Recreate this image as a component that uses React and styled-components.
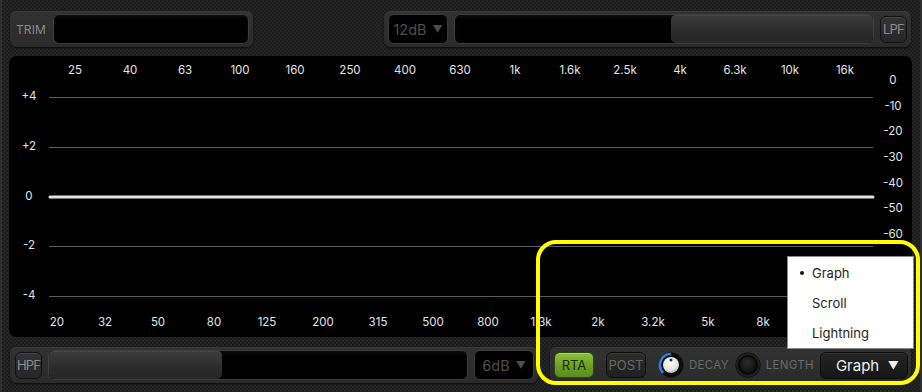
import React from 'react';
import styled, { createGlobalStyle } from 'styled-components';

const Global = createGlobalStyle`
  html, body { margin: 0; padding: 0; background: #1d1d1d; }
  body { font-family: Inter, "Open Sans", "Liberation Sans", sans-serif; }
  * { box-sizing: border-box; }
`;

const Page = styled.div`
  position: relative;
  width: 922px;
  height: 392px;
  padding: 11px 10px 0 9px;
  display: flex;
  flex-direction: column;
  overflow: hidden;
  background: repeating-conic-gradient(#252525 0 25%, #1b1b1b 0 50%) 0 0 / 4px 4px;
  box-shadow: inset 2px 0 0 #2e2e2e, inset -2px 0 0 #2e2e2e;
`;

const Bar = styled.div`
  display: flex;
  justify-content: space-between;
  align-items: center;
  padding: 0 1px;
  height: 36px;
  margin-top: ${p => p.$mt || 0}px;
`;

const Group = styled.div`
  display: flex;
  align-items: center;
  width: ${p => p.$w}px;
  height: 36px;
  padding: 0 4px 0 ${p => p.$pl || 4}px;
  gap: ${p => p.$gap || 6}px;
  background: linear-gradient(#323232, #2a2a2a);
  border-radius: 7px;
  box-shadow: inset 0 1px 0 #3a3a3a, 0 1px 2px rgba(0, 0, 0, 0.7);
`;

const GroupLabel = styled.span`
  font-size: 12px;
  color: #8a8a8a;
  letter-spacing: 0.1px;
  width: 29px;
`;

const Field = styled.div`
  position: relative;
  flex: 1;
  height: 30px;
  background: #000;
  border-radius: 6px;
  border: 1px solid #3d3d3d;
  box-shadow: inset 0 2px 3px rgba(255, 255, 255, 0.06);
  overflow: hidden;
  display: flex;
  justify-content: ${p => (p.$thumbRight ? 'flex-end' : 'flex-start')};
`;

const Thumb = styled.div`
  height: 100%;
  width: ${p => p.$w}px;
  border-radius: 5px;
  background: linear-gradient(#3b3b3b, #2c2c2c 60%, #262626);
  box-shadow: inset 0 1px 0 #444;
`;

const DbSelect = styled.div`
  width: 60px;
  height: 30px;
  flex: none;
  background: #000;
  border: 1px solid #3a3a3a;
  border-radius: 6px;
  display: flex;
  align-items: center;
  justify-content: center;
  gap: 6px;
  color: #4e4e4e;
  font-size: 14.5px;
  span { font-size: 10px; }
`;

const FilterButton = styled.div`
  width: 27px;
  height: 27px;
  flex: none;
  border-radius: 6px;
  background: linear-gradient(#333, #262626);
  border: 1px solid #111;
  box-shadow: inset 0 1px 0 #444;
  color: #8c8c8c;
  font-size: 13px;
  display: flex;
  align-items: center;
  justify-content: center;
  letter-spacing: -0.8px;
`;

const Chart = styled.div`
  position: relative;
  margin-top: 9px;
  width: 903px;
  height: 281px;
  background: #000;
  border-radius: 8px;
  flex: none;
`;

const Grid = styled.svg`
  position: absolute;
  left: 0;
  top: 0;
`;

const AxisLabel = styled.span`
  position: absolute;
  transform: translate(-50%, -50%);
  font-size: 11.5px;
  color: #e4e4e4;
  white-space: nowrap;
  line-height: 1;
`;

const ToggleButton = styled.div`
  width: 40px;
  height: 26px;
  flex: none;
  border-radius: 6px;
  display: flex;
  align-items: center;
  justify-content: center;
  font-size: 13px;
  margin-right: ${p => p.$mr || 0}px;
  ${p =>
    p.$on
      ? `background: linear-gradient(#8cc13e, #6a9e25 55%, #5a8c1c);
         color: #18260a; border: 1px solid #2d4a0c;
         box-shadow: inset 0 1px 0 #a6d85a;`
      : `background: linear-gradient(#2c2c2c, #1f1f1f);
         color: #666; border: 1px solid #0c0c0c;
         box-shadow: inset 0 1px 0 #3a3a3a;`}
`;

const KnobControl = styled.div`
  display: flex;
  align-items: center;
  gap: 5px;
  color: #6a6a6a;
  font-size: 11.5px;
  letter-spacing: 0.3px;
`;

const ModeSelect = styled.div`
  width: 88px;
  height: 27px;
  flex: none;
  margin-left: auto;
  border-radius: 6px;
  background: linear-gradient(#242424, #161616);
  border: 1px solid #0b0b0b;
  box-shadow: inset 0 1px 0 #333;
  display: flex;
  align-items: center;
  padding: 0 8px 0 15px;
  justify-content: space-between;
  color: #eee;
  font-size: 15px;
  span { font-size: 11px; }
`;

const Highlight = styled.div`
  position: absolute;
  left: 536px;
  top: 240px;
  width: 384px;
  height: 145px;
  border: 4.5px solid #ffff00;
  border-radius: 20px;
  pointer-events: none;
`;

const Menu = styled.div`
  position: absolute;
  left: 787px;
  top: 256px;
  width: 127px;
  height: 93px;
  padding-top: 1px;
  background: #fff;
  border: 1px solid #8a8a8a;
`;

const MenuItem = styled.div`
  position: relative;
  height: 30px;
  display: flex;
  align-items: center;
  padding-left: 24px;
  font-size: 13px;
  color: #1e1e1e;
  &::before {
    content: ${p => (p.$selected ? "''" : 'none')};
    position: absolute;
    left: 12px;
    top: 13px;
    width: 4px;
    height: 4px;
    border-radius: 50%;
    background: #111;
  }
`;

const topFreqs = ['25', '40', '63', '100', '160', '250', '400', '630', '1k', '1.6k', '2.5k', '4k', '6.3k', '10k', '16k'];
const bottomFreqs = [
  ['20', 48], ['32', 96], ['50', 149], ['80', 205], ['125', 258], ['200', 314], ['315', 369],
  ['500', 424], ['800', 479], ['1.3k', 532], ['2k', 589], ['3.2k', 644], ['5k', 699], ['8k', 754],
];
const gainLevels = [['+4', 41], ['+2', 91], ['0', 141], ['-2', 190], ['-4', 240]];
const dbLevels = ['0', '-10', '-20', '-30', '-40', '-50', '-60'];

function DecayKnob() {
  return (
    <svg width="26" height="26" viewBox="0 0 26 26">
      <circle cx="13" cy="13" r="12.5" fill="#0c0c0c" />
      <path d="M5.2 20.8 A11 11 0 0 1 13 2" fill="none" stroke="#2f80d6" strokeWidth="2.6" />
      <defs>
        <radialGradient id="kw" cx="45%" cy="35%" r="70%">
          <stop offset="0" stopColor="#ffffff" />
          <stop offset="0.7" stopColor="#e2e2e2" />
          <stop offset="1" stopColor="#9a9a9a" />
        </radialGradient>
      </defs>
      <circle cx="13" cy="13" r="8" fill="url(#kw)" />
      <circle cx="13" cy="8" r="1.5" fill="#1b3350" />
    </svg>
  );
}

function LengthKnob() {
  return (
    <svg width="26" height="26" viewBox="0 0 26 26">
      <defs>
        <radialGradient id="kd" cx="45%" cy="35%" r="70%">
          <stop offset="0" stopColor="#2c2c2c" />
          <stop offset="1" stopColor="#0d0d0d" />
        </radialGradient>
      </defs>
      <circle cx="13" cy="13" r="12.5" fill="#080808" />
      <circle cx="13" cy="13" r="11" fill="none" stroke="#1f1f1f" strokeWidth="2" />
      <circle cx="13" cy="13" r="8" fill="url(#kd)" />
    </svg>
  );
}

export default function App() {
  return (
    <>
      <Global />
      <Page>
        <Bar>
          <Group $w={243} $pl={6} $gap={8}>
            <GroupLabel>TRIM</GroupLabel>
            <Field />
          </Group>
          <Group $w={527} $gap={6}>
            <DbSelect>12dB <span>▼</span></DbSelect>
            <Field $thumbRight>
              <Thumb $w={202} />
            </Field>
            <FilterButton>LPF</FilterButton>
          </Group>
        </Bar>

        <Chart>
          <Grid width="903" height="281">
            {[41.5, 91.5, 190.5, 240.5].map(y => (
              <line key={y} x1="40" x2="864" y1={y} y2={y} stroke="#5e5e5e" strokeWidth="1" />
            ))}
            <line x1="41" x2="864" y1="141" y2="141" stroke="#e2e2e2" strokeWidth="3" strokeLinecap="round" />
          </Grid>
          {topFreqs.map((f, i) => (
            <AxisLabel key={f} style={{ left: 66 + 55 * i, top: 15 }}>{f}</AxisLabel>
          ))}
          {bottomFreqs.map(([f, x]) => (
            <AxisLabel key={f} style={{ left: x, top: 267 }}>{f}</AxisLabel>
          ))}
          {gainLevels.map(([g, y]) => (
            <AxisLabel key={g} style={{ left: 20, top: y }}>{g}</AxisLabel>
          ))}
          {dbLevels.map((d, i) => (
            <AxisLabel key={d} style={{ left: 884, top: 25 + 25.67 * i }}>{d}</AxisLabel>
          ))}
        </Chart>

        <Bar $mt={10}>
          <Group $w={528} $pl={5} $gap={6}>
            <FilterButton>HPF</FilterButton>
            <Field>
              <Thumb $w={173} />
            </Field>
            <DbSelect>6dB <span>▼</span></DbSelect>
          </Group>
          <Group $w={361} $gap={6}>
            <ToggleButton $on $mr={6}>RTA</ToggleButton>
            <ToggleButton $mr={6}>POST</ToggleButton>
            <KnobControl>
              <DecayKnob />
              DECAY
            </KnobControl>
            <KnobControl>
              <LengthKnob />
              LENGTH
            </KnobControl>
            <ModeSelect>Graph <span>▼</span></ModeSelect>
          </Group>
        </Bar>

        <Highlight />
        <Menu>
          <MenuItem $selected>Graph</MenuItem>
          <MenuItem>Scroll</MenuItem>
          <MenuItem>Lightning</MenuItem>
        </Menu>
      </Page>
    </>
  );
}
